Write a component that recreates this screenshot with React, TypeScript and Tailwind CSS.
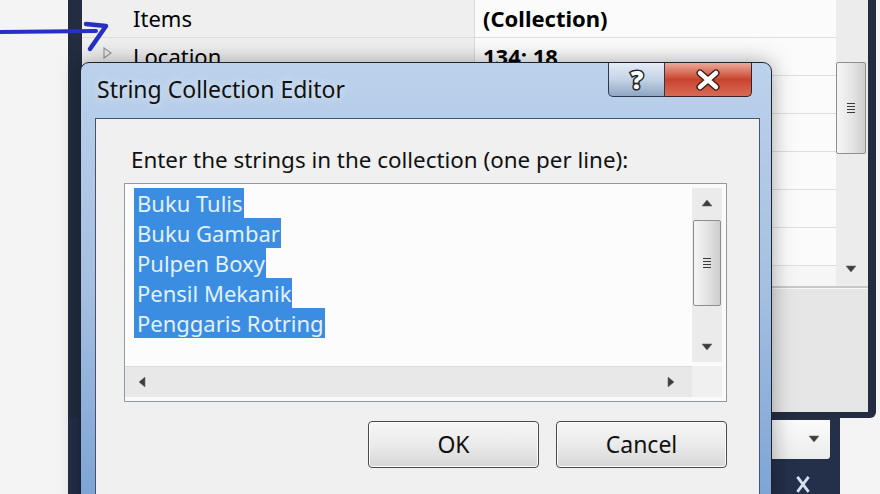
const items = ["Buku Tulis", "Buku Gambar", "Pulpen Boxy", "Pensil Mekanik", "Penggaris Rotring"];

const Tri = ({ dir, className = "" }: { dir: "up" | "down" | "left" | "right"; className?: string }) => {
  const pts = {
    up: "1,8 6,2 11,8",
    down: "1,2 11,2 6,8",
    left: "8,1 8,11 2,6",
    right: "2,1 2,11 8,6",
  }[dir];
  return (
    <svg width="12" height="12" viewBox="0 0 12 12" className={className}>
      <polygon points={pts} fill="#3c3c3c" stroke="#6b6b6b" strokeWidth="0.6" />
    </svg>
  );
};

const Grip = () => (
  <div className="flex flex-col gap-[2px]">
    {[0, 1, 2, 3].map((i) => (
      <div key={i} className="w-[8px] h-[1px] bg-[#3a3a3a]" />
    ))}
  </div>
);

const BackWindow = () => (
  <>
    <div className="absolute left-[68px] top-0 w-[808px] h-[418px] bg-[#232c40] pl-[14px] pr-[8px] pb-[6px] rounded-br-[6px] flex flex-col">
      <div className="flex h-[288px] bg-[#f6f6f6] border-b-2 border-[#c8c8c8]">
        <div className="flex-1 flex flex-col">
          {[
            ["Items", "(Collection)"],
            ["Location", "134; 18"],
            ["", ""],
            ["", ""],
            ["", ""],
            ["", ""],
            ["", ""],
          ].map(([name, value], i) => (
            <div key={i} className="flex h-[38px] border-b border-[#dedede] text-[22px] leading-[36px]">
              <div className="w-[393px] relative bg-[#efefef] pl-[51px] border-r border-[#dcdcdc]">
                {i === 1 && (
                  <svg width="10" height="12" viewBox="0 0 10 12" className="absolute left-[21px] top-[9px]">
                    <polygon points="1,1 8,6 1,11" fill="none" stroke="#9a9a9a" strokeWidth="1.2" />
                  </svg>
                )}
                {name}
              </div>
              <div className="flex-1 bg-[#fbfbfb] pl-[8px] font-bold">{value}</div>
            </div>
          ))}
        </div>
        <div className="w-[32px] pr-[2px] bg-[#ececec] flex flex-col items-center">
          <div className="h-[62px]" />
          <div className="w-[30px] h-[92px] rounded-[2px] border border-[#8e8e8e] bg-gradient-to-r from-[#f5f5f5] via-[#e6e6e6] to-[#cfcfcf] flex items-center justify-center">
            <Grip />
          </div>
          <div className="flex-1" />
          <Tri dir="down" className="mb-[10px]" />
        </div>
      </div>
      <div className="flex-1 bg-[#e6e6e6] border-t border-[#f8f8f8]" />
    </div>
    <div className="absolute left-[68px] top-[418px] w-[772px] h-[76px] bg-[#243049] flex flex-col items-end pr-[10px]">
      <div className="w-[140px] h-[42px] mt-[2px] bg-gradient-to-b from-[#fbfbfb] to-[#ececec] rounded-b-[3px] flex items-center justify-end pr-[10px]">
        <Tri dir="down" />
      </div>
      <svg width="16" height="20" viewBox="0 0 16 20" className="mr-[19px] mt-[16px]">
        <path d="M2 2 L14 18 M14 2 L2 18" stroke="#d6e0ee" strokeWidth="3" />
      </svg>
    </div>
  </>
);

const Pointer = () => (
  <svg width="115" height="60" viewBox="0 0 115 60" className="absolute left-0 top-0">
    <path d="M0 32 L96 31" stroke="#2630c4" strokeWidth="4" fill="none" strokeLinecap="round" />
    <path d="M86 24 L106 26 L90 49" stroke="#2630c4" strokeWidth="4.5" fill="none" strokeLinecap="round" strokeLinejoin="round" />
  </svg>
);

const Dialog = () => (
  <div className="absolute left-[80px] top-[62px] w-[692px] h-[460px] rounded-t-[9px] border border-[#1b2435] bg-gradient-to-b from-[#bcd2ec] via-[#a4bfe0] to-[#7aa0d2] shadow-[0_0_22px_rgba(0,0,0,0.35)] flex flex-col">
    <div className="h-[55px] flex justify-between pl-[16px] pr-[19px]">
      <div className="pt-[11px] text-[23px] leading-[30px] text-[#111] [text-shadow:0_0_8px_rgba(255,255,255,0.7)]">
        String Collection Editor
      </div>
      <div className="flex h-[34px]">
        <div className="w-[57px] rounded-bl-[5px] border border-t-0 border-[#2b3850] bg-gradient-to-b from-[#e4ecf6] via-[#c4d3e6] to-[#8fa6c2] flex items-center justify-center">
          <svg width="30" height="34" viewBox="0 0 30 34">
            <text
              x="15"
              y="26"
              textAnchor="middle"
              fontFamily="Noto Sans, sans-serif"
              fontWeight="900"
              fontSize="25"
              fill="#ffffff"
              stroke="#22262e"
              strokeWidth="3"
              paintOrder="stroke"
            >
              ?
            </text>
          </svg>
        </div>
        <div className="w-[87px] rounded-br-[5px] border border-l-0 border-t-0 border-[#3a2020] bg-gradient-to-b from-[#eaa898] via-[#c8432e] to-[#d86a55] flex items-center justify-center">
          <svg width="26" height="22" viewBox="0 0 26 22">
            <path d="M5 4 L21 18 M21 4 L5 18" stroke="#3a1a12" strokeWidth="7" strokeLinecap="round" />
            <path d="M5 4 L21 18 M21 4 L5 18" stroke="#ffffff" strokeWidth="4.5" strokeLinecap="round" />
          </svg>
        </div>
      </div>
    </div>
    <div className="flex-1 ml-[14px] mr-[11px] border border-[#44546e] bg-[#f0f0f0] pl-[28px] pr-[32px] pt-[27px] flex flex-col">
      <div className="ml-[7px] text-[22.4px] leading-[28px] text-[#111]">
        Enter the strings in the collection (one per line):
      </div>
      <div className="mt-[9px] w-[603px] h-[219px] border border-[#8f99a8] bg-[#fafafa] pr-[4px] pb-[3px] flex flex-col">
        <div className="flex h-[182px]">
          <div className="flex-1 bg-[#fcfcfc] pl-[9px] pt-[4px]">
            {items.map((t) => (
              <div key={t} className="h-[30px]">
                <span className="inline-block h-[30px] bg-[#3b8de2] pl-[3px] pr-[1px] text-[22px] leading-[30px] text-[#e2f1ff]">
                  {t}
                </span>
              </div>
            ))}
          </div>
          <div className="w-[30px] mt-[4px] mb-[4px] bg-[#ebebeb] flex flex-col items-center">
            <div className="h-[32px] w-full flex items-center justify-center">
              <Tri dir="up" />
            </div>
            <div className="w-[28px] h-[86px] rounded-[2px] border border-[#8e8e8e] bg-gradient-to-r from-[#f5f5f5] via-[#e4e4e4] to-[#cdcdcd] flex items-center justify-center">
              <Grip />
            </div>
            <div className="flex-1" />
            <div className="h-[28px] w-full flex items-center justify-center">
              <Tri dir="down" />
            </div>
          </div>
        </div>
        <div className="flex h-[31px]">
          <div className="flex-1 bg-[#e8e8e8] border-t border-[#dadada] flex items-center justify-between pl-[12px] pr-[14px]">
            <Tri dir="left" />
            <Tri dir="right" />
          </div>
          <div className="w-[30px] bg-[#f0f0f0]" />
        </div>
      </div>
      <div className="mt-[19px] flex justify-end gap-[17px]">
        {["OK", "Cancel"].map((label) => (
          <div
            key={label}
            className="w-[171px] h-[47px] rounded-[4px] border border-[#4a4a4a] bg-gradient-to-b from-[#f6f6f6] via-[#ebebeb] to-[#d6d6d6] shadow-[inset_0_0_0_1px_#fbfbfb] flex items-center justify-center text-[23px] text-[#111]"
          >
            {label}
          </div>
        ))}
      </div>
    </div>
  </div>
);

export default function App() {
  return (
    <div className="relative w-[880px] h-[494px] overflow-hidden bg-[#f4f4f4] font-['Noto_Sans',sans-serif] text-black">
      <BackWindow />
      <Pointer />
      <Dialog />
    </div>
  );
}
